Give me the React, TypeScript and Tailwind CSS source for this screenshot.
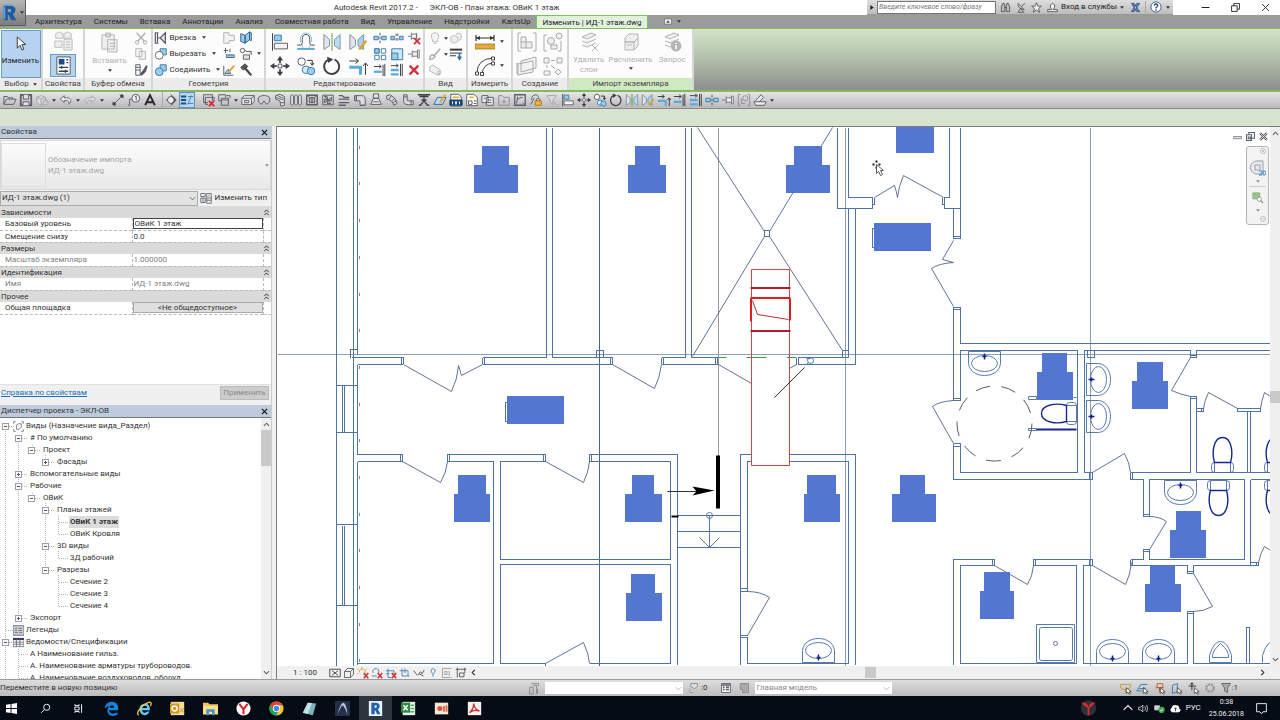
import React from "react";

type IconProps = { className?: string; children: React.ReactNode; color?: string; weight?: string };

/* Every small icon is drawn on a 16 × 16 grid. */
function Icon({ className = "size-[14px]", color = "#5a6068", weight = "1.1", children }: IconProps) {
  return (
    <svg viewBox="0 0 16 16" className={"shrink-0 " + className} fill="none" stroke={color} strokeWidth={weight} aria-hidden="true">
      {children}
    </svg>
  );
}

function Caret({ className = "" }: { className?: string }) {
  return (
    <svg viewBox="0 0 6 4" className={"h-[3px] w-[4px] shrink-0 " + className} aria-hidden="true">
      <path d="M0 0H6L3 4Z" fill="#333" />
    </svg>
  );
}

const BLUE = "#9accec";
const EDGE = "#3f7daa";

const icons = {
  open: <Icon><path d="M1 13V4H5L6 5.500H11V7M1 13L4 7H15L12 13Z" /></Icon>,
  save: <Icon><path d="M2 2H14V14H2Z" strokeWidth="2" /><path d="M5 2V7H11V2M4.500 14V10H11.500V14" fill="#ddd" /></Icon>,
  sync: <Icon color="#a5a5a5"><path d="M2 5L7 3L12 5V11L7 14L2 11ZM2 5L7 7L12 5M7 7V14" fill="#ddd" /><circle cx="12" cy="11" r="3" fill="#ccc" /></Icon>,
  undo: <Icon color="#63676c"><path d="M6 3L1.500 7L6 11V8.500C11 8 12 10 11 13C16 9 13 4.500 6 5.500Z" fill="#eee" /></Icon>,
  redo: <Icon color="#a8a8a8"><path d="M10 3L14.500 7L10 11V8.500C5 8 4 10 5 13C0 9 3 4.500 10 5.500Z" fill="#ddd" /></Icon>,
  measure: <Icon><path d="M4 12L12 4" /><path d="M1.500 10L6 14.500M10 1.500L14.500 6" /><circle cx="3.500" cy="12.500" r="1.600" fill="#333" /><circle cx="12.500" cy="3.500" r="1.600" fill="#333" /></Icon>,
  tag: <Icon><circle cx="10" cy="6" r="4.500" fill="#eee" /><path d="M9 4.500L10.500 3.500V8.500M5.500 7H3V14H1" /></Icon>,
  textA: <Icon color="#2a2a2a"><path d="M2.500 14L8 2.500L13.500 14M4.500 10.500H11.500" strokeWidth="2.200" /></Icon>,
  section: <Icon><circle cx="8" cy="8" r="4" fill="#eee" /><path d="M2 8H4M8 2L14 8L8 14L12 8Z" fill="#333" /></Icon>,
  thin: <Icon color="#1f4c86"><path d="M1 4H7M1 8H7M1 12H7" strokeWidth="2.200" /><path d="M9 13L13 3M9 4H15M9 12H15" stroke="#3e82c4" /></Icon>,
  closeHidden: <Icon><path d="M3 2H13V9M3 2V11H8M5 5H15V9M5 5V13H8" /><path d="M9 9L15 15M15 9L9 15" stroke="#d23" strokeWidth="2" /></Icon>,
  switchWin: <Icon><path d="M2 2H10V5M2 2V9H5M5 6H13V14H5ZM5 8H13" /><path d="M11 3H15V6" /></Icon>,
  duct: <Icon><path d="M1 6L4 3H15V10L12 13H1ZM1 6H12V13M12 6L15 3M4 8.500H9V11H4Z" fill="#eee" /></Icon>,
  ring: <Icon><ellipse cx="8" cy="6" rx="6.500" ry="3" /><path d="M1.500 6V10L5 13L8 9L11 13L14.500 10V6" fill="#ccc" /></Icon>,
  flex: <Icon><path d="M3 3L8 1.500L13 4V14L9 15L8 9L3 7ZM3 5L12 8M5 3L12 6M9 11L13 11" fill="#e8e8e8" /></Icon>,
  radiator: <Icon><path d="M2 3Q4 1 5 3V13Q4 15 2 13ZM6.500 3Q8 1 9.500 3V13Q8 15 6.500 13ZM11 3Q12 1 14 3V13Q12 15 11 13Z" fill="#eee" /></Icon>,
  grille: <Icon><path d="M2 2.500H14V13.500H2Z" strokeWidth="1.600" /><path d="M5 5H11V11H5ZM2 2.500L5 5M14 2.500L11 5M8 5V11" fill="#aaa" /></Icon>,
  fan: <Icon><path d="M2 2.500H14V13.500H2Z" /><path d="M8 8L4 4H7ZM8 8L12 5V9ZM8 8L11 12H7ZM8 8L4 11V7Z" fill="#bbb" /></Icon>,
  list: <Icon><path d="M2 3H6L8 5H14M2 7H14M2 11H14M2 14H10" strokeWidth="1.500" /></Icon>,
  elbow: <Icon><path d="M2 3H10Q14 3 14 8V14H8V9H2ZM2 3V9M8 14H14M4 3V9" fill="#ddd" /></Icon>,
  terminal: <Icon><path d="M5 1H11V6H5ZM2 13L5 6H11L14 13ZM5 10H11" fill="#e4e4e4" /></Icon>,
  hose: <Icon><path d="M2 3L6 2Q12 5 14 12L10 14Q9 8 2 7ZM7 3L5 7M11 6L8 9M13 9L9 11" fill="#ddd" /></Icon>,
  pipe: <Icon><path d="M3 2H7V8Q7 9.500 9 9H14V13.500H8Q3 13 3 9ZM3 4.500H7M11.500 9V13.500" fill="#ddd" /></Icon>,
  sprinkler: <Icon color="#3d4045"><path d="M1 2H15M3 4H13M8 4V9M5 8H11M4 14L8 9L12 14M2 14H4M12 14H14" strokeWidth="1.500" /></Icon>,
  note: <Icon color="#2f6f9f"><path d="M1 13L5 5H15L11 13Z" fill="#bcdcf2" /><path d="M8 11L14 2" stroke="#e0a230" strokeWidth="2.200" /></Icon>,
  rvt: <Icon><path d="M2 1.500H11L14 4.500V15H2Z" fill="#fff" /><path d="M4 5H12" stroke="#e0b030" strokeWidth="2" /><path d="M1 8H15V14H1Z" fill="#16407c" stroke="#16407c" /><path d="M4 9.500V13M7 9.500L8 13L9 9.500M12 9.500V13" stroke="#fff" /></Icon>,
  cadSheet: <Icon><path d="M2 1.500H10L14 5V14.500H2Z" fill="#fff" /><path d="M4 9H8V13H4ZM10 9H13M10 12H13" /><path d="M5 5H10" stroke="#e0b030" strokeWidth="2" /></Icon>,
  sheets: <Icon><path d="M1 3H8V11H1ZM6 5H14V14H6Z" fill="#eee" /><path d="M8 8H12M8 11H12M3 6H5" /></Icon>,
  frame: <Icon color="#8b8f95"><path d="M2 3H6L8 5H14V14H2Z" /><path d="M8 7V12M6 10H10" /></Icon>,
  curve: <Icon><path d="M2 2H14V14H2Z" strokeWidth="1.500" /><path d="M4 12Q4 5 11 5M5 4V8M11 11L13 13" /></Icon>,
  lock: <Icon><path d="M3 8Q3 2 8 2Q10 2 11 5M2 13L6 6" /><path d="M7 9H14V14H7Z" fill="#f0b545" stroke="#b07818" /><path d="M8.500 9V7Q10.500 5 12.500 7V9" /></Icon>,
  funnel: <Icon color="#a3a3a3"><path d="M2 3H13L9 8V13L6 11V8ZM10 10L14 14" fill="#ddd" /></Icon>,
  align: <Icon color={EDGE}><path d="M2 1V15" stroke="#444" /><path d="M3.500 2.500H9V7H3.500Z" fill={BLUE} /><path d="M3.500 9H14V13.500H3.500Z" fill="#f2f4f8" stroke="#666" /></Icon>,
  move: <Icon color="#3c3f43"><path d="M8 1V5.500M8 10.500V15M1 8H5.500M10.500 8H15" strokeWidth="1.400" /><path d="M8 0L10.500 3.500H5.500ZM8 16L10.500 12.500H5.500ZM0 8L3.500 5.500V10.500ZM16 8L12.500 5.500V10.500Z" fill="#3c3f43" stroke="none" /><path d="M6.500 6.500H9.500V9.500H6.500Z" fill="#fff" strokeWidth=".7" /></Icon>,
  copy: <Icon><circle cx="4.500" cy="4.500" r="3" fill="#fff" /><circle cx="8" cy="11" r="3" fill="#d6ebf9" stroke={EDGE} /><circle cx="12" cy="12" r="3" fill={BLUE} stroke={EDGE} /><path d="M9 3.500H13V7M11.500 5.500L13 7.500L14.500 5.500" stroke="#333" /></Icon>,
  rotate: <Icon color="#3c3f43"><path d="M5 3A6 6 0 1 0 10 2.800" strokeWidth="1.500" /><path d="M4 0.500L9 2.500L5 5.500Z" fill="#3c3f43" stroke="none" /></Icon>,
  mirror: <Icon color="#8a9099"><path d="M1.500 2L6 6V11L1.500 14Z" fill="#dfe5ea" /><path d="M14.500 2L10 6V11L14.500 14Z" fill="#b9d9ec" stroke="#7b9db3" /><path d="M8 1V15" stroke="#5a9e45" /></Icon>,
  mirrorPen: <Icon color="#8a9099"><path d="M1.500 2L6 6V11L1.500 14Z" fill="#dfe5ea" /><path d="M12.500 2L8 6V11L12.500 14Z" fill="#a9d3ee" stroke="#6b97b3" /><path d="M9 14L14.500 7" stroke="#e0a230" strokeWidth="2.200" /></Icon>,
  trim: <Icon color="#3a3d42"><path d="M1 4H8M6 2L8.500 4L6 6M14 15V6M12 8L14 5.500L16 8" /><path d="M1 9H10V15" stroke="#5aa9dc" strokeWidth="2.400" /></Icon>,
  trimOne: <Icon color="#3a3d42"><path d="M1 4H9M7 2L9.500 4L7 6M13.500 1V15" /><path d="M1 10H10" stroke="#5aa9dc" strokeWidth="2.600" /><path d="M11.500 2V15" /></Icon>,
  trimMany: <Icon color="#3a3d42"><path d="M1 3H9M7 1L9.500 3L7 5M14 1V15M12 1V15" /><path d="M1 8H10M1 13H10" stroke="#5aa9dc" strokeWidth="2.600" /></Icon>,
  split: <Icon color={EDGE}><path d="M1 6H6V10H1ZM10 6H15V10H10Z" fill={BLUE} /><path d="M8 2V14" stroke="#555" strokeDasharray="3 1.500" /></Icon>,
  splitGap: <Icon color={EDGE}><path d="M1 6H5V10H1ZM11 6H15V10H11Z" fill={BLUE} /><path d="M7 3V13M9 3V13" stroke="#555" strokeDasharray="3 2" /></Icon>,
  pin: <Icon color="#777c82"><path d="M1 8H6M6 4V12M6 5.500H12V10.500H6M12 3.500V12.500H14V3.500Z" fill="#eee" /></Icon>,
  unpin: <Icon color="#777c82"><path d="M1 6H5M5 2V10M5 3.500H11V8.500H5M11 2V10" fill="#eee" /><path d="M8 8L15 15M15 8L8 15" stroke="#d42a35" strokeWidth="2" /></Icon>,
  group: <Icon color="#8b8f95"><path d="M4 1.500H1.500V14.500H4M12 1.500H14.500V14.500H12" /><circle cx="9.500" cy="6" r="3" /><path d="M5 6V12H9" /></Icon>,
  pencilBox: <Icon><path d="M3 9L9 2L12 5L7 10M1 10H15L13 14H3Z" fill="#eee" /></Icon>,
  array: <Icon color={EDGE}><path d="M2 2H7V7H2ZM9.500 2H14.500V7H9.500ZM2 9.500H7V14.500H2ZM9.500 9.500H14.500V14.500H9.500Z" fill="#fff" /><path d="M2 2H7V7H2Z" fill={BLUE} /></Icon>,
  scale: <Icon color={EDGE}><path d="M2 2H14.500V14.500H2Z" fill="#cfe6f6" /><path d="M2 7H9V14.500H2Z" fill={BLUE} /></Icon>,
  remove: <Icon color="#cf3540"><path d="M3 3L13 13M13 3L3 13" strokeWidth="2.800" /></Icon>,
  offset: <Icon><path d="M1 10.500H3.500Q5 10.500 5 8.500V6Q5 2 8 2Q11 2 11 6V8.500Q11 10.500 12.500 10.500H15" stroke="#4a5058" /><path d="M1 13.500H15" stroke="#5aa9dc" strokeWidth="1.600" /><path d="M3.500 8V5.500Q4 0.800 8 0.800Q12 0.800 12.500 5.500V8M5 10.500V12.500M11 10.500V12.500" stroke="#8cc1e4" /></Icon>,
  cut: <Icon color="#b0b0b0"><path d="M3 2L12 12M13 2L4 12" strokeWidth="1.500" /><circle cx="3.500" cy="13" r="2" /><circle cx="12.500" cy="13" r="2" /></Icon>,
  copyGray: <Icon color="#b4b4b4"><path d="M2 2H9V11H2ZM6 5H13V14H6Z" fill="#f6f6f6" /></Icon>,
  matchProps: <Icon><path d="M2 2H7V14H2ZM2 5H7M2 8H7" /><path d="M7 13L11 8L14 3L15 4L13 10L9 14Z" fill="#555" /></Icon>,
  cope: <Icon><path d="M1.500 2V14M4 2V14M1 2H5M1 14H5M4 8H7L13 2V14L7 8" fill="#dde3e8" strokeWidth="1.400" /></Icon>,
  cutGeo: <Icon color={EDGE}><path d="M7 2H14V9H7Z" fill={BLUE} /><circle cx="6" cy="9.500" r="4.500" fill="#fff" stroke="#666" /></Icon>,
  join: <Icon color={EDGE}><path d="M7 2H14V9H7Z" fill={BLUE} /><circle cx="6" cy="10" r="4.500" fill={BLUE} /></Icon>,
  wallJoin: <Icon color="#b0b0b0"><path d="M2 2H8V5H14V11H8V14H2Z" fill="#f4f4f4" /></Icon>,
  openFace: <Icon color="#31618c"><path d="M2 3L7 5V14L2 12ZM7 5L12 1V10L7 14ZM12 1L14 2V11L12 10" fill={BLUE} /></Icon>,
  beam: <Icon><path d="M2 4H7M4 1V7M5 9H14V12H5ZM9 2V6" /><path d="M5 10H14" stroke="#5aa9dc" strokeWidth="2" /></Icon>,
  geo: <Icon><circle cx="4" cy="4" r="2.500" /><path d="M8 5H14V9M5 9H12V14H5ZM6 3L8 5" fill="#e6e6e6" /></Icon>,
  paint: <Icon><path d="M2 3V14H13" /><path d="M3 12L7 7L10 12Z" fill={BLUE} stroke={EDGE} /><path d="M7 11L14 3" stroke="#e0a230" strokeWidth="2" /></Icon>,
  hammer: <Icon color="#444"><path d="M2 5L7 1L10 4L5 8Z" fill="#555" /><path d="M7 6L14 14" strokeWidth="2.400" /></Icon>,
  bulb: <Icon color="#bbb"><path d="M5 10Q3 7 4 4Q8 0 12 4Q13 7 11 10V12H5ZM6 14H10" fill="#f4f4f4" /></Icon>,
  cubes: <Icon color="#bbb"><path d="M2 7L6 5L10 7V12L6 14L2 12ZM8 4L11 2L14 4V9L11 11" fill="#eee" /></Icon>,
  brush: <Icon color="#aaa"><path d="M2 14Q2 9 6 9L8 11Q7 14 2 14ZM7 10L14 2" strokeWidth="1.700" /></Icon>,
  linework: <Icon color="#333"><path d="M1 3H15" strokeWidth="2.200" /><path d="M1 7H15M1 10H8" /><path d="M12 7V14M10 11L12 14L14 11" stroke="#2d6db0" strokeWidth="1.800" /></Icon>,
  pipeGray: <Icon color="#b4b4b4"><path d="M2 5L5 2L14 8V13L11 14L2 9Z" fill="#f0f0f0" /><circle cx="12" cy="11" r="1.500" /></Icon>,
};

type IconName = keyof typeof icons;

function IconButton({ name, label, className = "" }: { name: IconName; label: string; className?: string }) {
  return (
    <button type="button" aria-label={label} className={"flex items-center justify-center " + className}>
      {icons[name]}
    </button>
  );
}

/* ---------- title bar and tabs ---------- */

function RevitR({ className }: { className: string }) {
  return (
    <svg viewBox="0 0 20 20" className={className} aria-hidden="true">
      <path fillRule="evenodd" d="M3 2H12Q18 3 17 8Q16 11 14 12L18 19H12L9 13H8V19H3ZM8 6V9.500H11Q13 8 11 6Z" fill="#1d5c9e" />
      <path d="M3 2L6 0.500H14L12 2ZM3 2V19L5 17V4Z" fill="#5fa3dc" />
    </svg>
  );
}

const tabs = ["Архитектура", "Системы", "Вставка", "Аннотации", "Анализ", "Совместная работа", "Вид", "Управление", "Надстройки", "KartsUp"];

function Header() {
  return (
    <header className="flex h-[29px] shrink-0 border-b border-[#86b862] bg-[#9b9b9b]">
      <button type="button" aria-label="Меню приложения" className="flex h-[26px] w-[26px] shrink-0 items-center border-r border-b border-[#5c5c5c] bg-linear-to-b from-[#b7b7b7] to-[#7d7d7d] pl-px">
        <RevitR className="size-[17px]" />
        <Caret className="ml-[2px]" />
      </button>
      <div className="flex min-w-0 flex-1 flex-col">
        <div className="flex h-[15px] items-center bg-white">
          <h1 className="flex-1 text-center text-[8px] whitespace-pre text-[#333]">Autodesk Revit 2017.2 -      ЭКЛ-ОВ - План этажа: ОВиК 1 этаж</h1>
          <div className="flex h-full items-center border-b border-[#999] bg-linear-to-b from-[#dedede] to-[#bdbdbd] pl-[3px]">
            <svg viewBox="0 0 4 6" className="mr-[3px] h-[5px] w-[4px]" aria-hidden="true"><path d="M0 0L4 3L0 6Z" fill="#222" /></svg>
            <input aria-label="Поиск" placeholder="Введите ключевое слово/фразу" className="h-[13px] w-[119px] border border-[#777] bg-white px-px text-[7px] italic placeholder:text-[#777]" />
            <button type="button" aria-label="Найти" className="ml-[4px]"><Icon className="size-[11px]" color="#444"><path d="M2 14V7L4 2H6L7 6V14ZM14 14V7L12 2H10L9 6V14ZM7 8H9" fill="#bbb" /></Icon></button>
            <button type="button" aria-label="Центр связи" className="ml-[5px]"><Icon className="size-[11px]" color="#444"><path d="M3 2Q2 10 12 11ZM8 6L13 2M3 15L7 9L11 15Z" /></Icon></button>
            <button type="button" aria-label="Избранное" className="ml-[4px]"><Icon className="size-[11px]" color="#444"><path d="M8 1L10 6H15L11 9.500L12.500 15L8 11.500L3.500 15L5 9.500L1 6H6Z" fill="#eee" /></Icon></button>
            <button type="button" className="ml-[5px] flex items-center gap-[3px] text-[8px] text-[#222]">
              <Icon className="size-[11px]" color="#444"><path d="M5 4Q8 0 11 4Q12 8 9 11H15V14H1V11H7Q4 8 5 4Z" fill="#f0f0f0" /></Icon>
              <span className="whitespace-nowrap">Вход в службы</span>
              <Caret />
            </button>
            <button type="button" aria-label="Exchange Apps" className="ml-[6px]"><Icon className="size-[11px]" color="#2c4c86"><path d="M2 2H6L14 14H10ZM14 2H10L2 14H6Z" fill="#5c83bd" /></Icon></button>
            <span className="mx-[4px] h-3 border-l border-[#aaa]" />
            <button type="button" aria-label="Справка" className="flex items-center gap-[4px]">
              <Icon className="size-[12px]" color="#2a4b78"><circle cx="8" cy="8" r="6.800" fill="#fff" /><path d="M5.500 6Q6 4 8 4Q10.500 4.200 10.500 6Q10.300 7.500 8 8.500V10M8 11V13" strokeWidth="1.700" /></Icon>
              <Caret />
            </button>
            <span className="w-[3px]" />
          </div>
          <div className="flex h-full w-[107px] items-center justify-end gap-[21px] pr-[10px]">
            <button type="button" aria-label="Свернуть"><Icon className="size-[9px]" color="#222"><path d="M1 8H15" strokeWidth="1.800" /></Icon></button>
            <button type="button" aria-label="Восстановить"><Icon className="size-[9px]" color="#222"><path d="M1 5H11V15H1ZM5 5V1H15V11H11" strokeWidth="1.600" /></Icon></button>
            <button type="button" aria-label="Закрыть"><Icon className="size-[9px]" color="#222"><path d="M2 2L14 14M14 2L2 14" strokeWidth="1.600" /></Icon></button>
          </div>
        </div>
        <nav className="flex h-[13px] items-stretch bg-[#9b9b9b] pl-[3px] text-[8px] leading-[13px] text-[#222]">
          {tabs.map((t) => (
            <button key={t} type="button" className="px-[6px] whitespace-nowrap">{t}</button>
          ))}
          <button type="button" className="border border-b-0 border-[#7fc05c] bg-[#e2f1db] px-[5px] whitespace-nowrap">Изменить | ИД-1 этаж.dwg</button>
          <button type="button" aria-label="Свернуть ленту" className="ml-[15px] flex items-center gap-[4px]">
            <Icon className="h-[7px] w-[10px]" color="#444"><path d="M0 2H16V14H0Z" fill="#eee" /><path d="M5 10L8 6L11 10Z" fill="#333" /></Icon>
            <Caret />
          </button>
        </nav>
      </div>
    </header>
  );
}

/* ---------- ribbon ---------- */

function Panel({ title, width, green, caret, children }: { title: string; width: string; green?: boolean; caret?: boolean; children: React.ReactNode }) {
  return (
    <section className={"flex shrink-0 flex-col border-r-2 border-[#d6d6d6] bg-[#fcfcfc] " + width}>
      <div className="flex h-[50px] items-center justify-center">{children}</div>
      <h2 className={"flex h-[12px] items-center justify-center gap-1 text-[8px] whitespace-nowrap text-[#444] " + (green ? "bg-[#cfeac2]" : "bg-[#ececec]")}>
        {title}
        {caret && <Caret />}
      </h2>
    </section>
  );
}

function Stack({ names, className = "" }: { names: [IconName, string][]; className?: string }) {
  return (
    <div className={"flex flex-col " + className}>
      {names.map(([n, l]) => <IconButton key={l} name={n} label={l} className="h-4 w-[17px]" />)}
    </div>
  );
}

function BigIcon({ label, children }: { label: string; children: React.ReactNode }) {
  return (
    <button type="button" aria-label={label} className="flex h-[24px] w-[26px] items-center justify-center">
      {children}
    </button>
  );
}

function enlarge(name: IconName) {
  return React.cloneElement(icons[name], { className: "size-[20px]", weight: "0.8" });
}

function GrayTool({ label, children, caret }: { label: React.ReactNode; children: React.ReactNode; caret?: boolean }) {
  return (
    <button type="button" className="flex h-[48px] flex-1 flex-col items-center pt-[2px] text-center text-[8px] leading-[10px] text-[#b0b0b0]">
      <svg viewBox="0 0 20 20" className="mb-[3px] size-[20px]" fill="#efefef" stroke="#b5b5b5" aria-hidden="true">{children}</svg>
      <span>{label}</span>
      {caret && <Caret className="mt-[2px]" />}
    </button>
  );
}

function Ribbon() {
  return (
    <div className="flex h-[63px] shrink-0 overflow-hidden border-b-2 border-[#86b862] bg-linear-to-b from-[#d2e3c8] via-[#b1bfaa] to-[#8e8e8e]">
      <Panel title="Выбор" width="w-[43px]" caret>
        <button type="button" className="flex h-[48px] w-[40px] flex-col items-center border border-[#6a9cc9] bg-[#b5d3ee] pt-[5px] text-[8px] text-[#222]">
          <svg viewBox="0 0 12 16" className="mb-[4px] h-[15px] w-[12px]" aria-hidden="true"><path d="M2 1V13L5 10L7 15L9 14L7 9H11Z" fill="#fff" stroke="#333" /></svg>
          Изменить
        </button>
      </Panel>
      <Panel title="Свойства" width="w-[42px]">
        <div className="flex flex-col items-center gap-[2px]">
          <button type="button" aria-label="Типоразмер" className="flex h-[22px] items-center">
            <svg viewBox="0 0 22 22" className="size-[20px]" fill="#eee" stroke="#bcbcbc" aria-hidden="true"><path d="M3 3L7 1L11 3V8H3ZM12 3L16 1L20 3V8H12ZM2 11H10V18H2ZM12 9H21V21H12ZM14 12H19M14 15H19M14 18H19" /></svg>
          </button>
          <button type="button" aria-label="Свойства" className="flex h-[23px] w-[26px] items-center justify-center border border-[#6a9cc9] bg-[#b5d3ee]">
            <svg viewBox="0 0 20 20" className="size-[19px]" aria-hidden="true"><path d="M3 1H17V19H3Z" fill="#fff" stroke="#555" /><path d="M5 3H11V9H5Z" fill="#1b4a82" /><path d="M13 4H15M13 7H15M5 12H15M5 16H15M8 10.500V13.500M12 14.500V17.500" stroke="#345" strokeWidth="1.500" /></svg>
          </button>
        </div>
      </Panel>
      <Panel title="Буфер обмена" width="w-[68px]">
        <button type="button" className="flex h-[48px] w-[46px] flex-col items-center pt-[2px] text-[8px] text-[#b0b0b0]">
          <svg viewBox="0 0 20 22" className="mb-[2px] h-[21px] w-[19px]" fill="#efefef" stroke="#b5b5b5" aria-hidden="true"><path d="M2 3H15V18H2ZM6 1H11V5H6ZM8 8H18V21H8ZM10 12H16M10 15H16" /></svg>
          Вставить
          <Caret className="mt-[2px]" />
        </button>
        <Stack names={[["cut", "Вырезать в буфер"], ["copyGray", "Копировать в буфер"], ["matchProps", "Копировать свойства"]]} />
      </Panel>
      <Panel title="Геометрия" width="w-[113px]">
        <div className="flex flex-1 flex-col pl-px">
          {([["cope", "Врезка"], ["cutGeo", "Вырезать"], ["join", "Соединить"]] as [IconName, string][]).map(([n, l]) => (
            <button key={n} type="button" className="flex h-4 items-center gap-[2px] text-[8px] text-[#333]">
              {icons[n]}{l}<Caret className="ml-[4px]" />
            </button>
          ))}
        </div>
        <Stack names={[["wallJoin", "Соединение стен"], ["beam", "Стык балок"], ["paint", "Краска"]]} />
        <Stack names={[["openFace", "Разделить грань"], ["geo", "Стык"], ["hammer", "Снос"]]} />
        <Caret className="mx-[3px]" />
      </Panel>
      <Panel title="Редактирование" width="w-[159px]">
        <div className="grid grid-cols-4">
          <BigIcon label="Выровнять">{enlarge("align")}</BigIcon>
          <BigIcon label="Смещение">{enlarge("offset")}</BigIcon>
          <BigIcon label="Зеркало: выбрать ось">{enlarge("mirror")}</BigIcon>
          <BigIcon label="Зеркало: нарисовать ось">{enlarge("mirrorPen")}</BigIcon>
          <BigIcon label="Переместить">{enlarge("move")}</BigIcon>
          <BigIcon label="Копировать">{enlarge("copy")}</BigIcon>
          <BigIcon label="Повернуть">{enlarge("rotate")}</BigIcon>
          <BigIcon label="Обрезать до угла">{enlarge("trim")}</BigIcon>
        </div>
        <Stack names={[["split", "Разделить"], ["array", "Массив"], ["trimOne", "Удлинить"]]} />
        <Stack names={[["splitGap", "Разделить с зазором"], ["scale", "Масштаб"], ["trimMany", "Удлинить несколько"]]} />
        <Stack names={[["unpin", "Открепить"], ["pin", "Закрепить"], ["remove", "Удалить"]]} />
      </Panel>
      <Panel title="Вид" width="w-[43px]">
        <Stack names={[["bulb", "Скрыть"], ["brush", "Переопределить"], ["pipeGray", "Вид элемента"]]} />
        <div className="flex h-[48px] flex-col gap-[13px] pt-[7px]"><Caret /><Caret /></div>
        <div className="h-[48px]"><Stack names={[["cubes", "Видимость"], ["linework", "Линии"]]} /></div>
      </Panel>
      <Panel title="Измерить" width="w-[45px]">
        <div className="flex flex-col">
          <button type="button" aria-label="Измерить длину" className="flex h-6 items-center gap-[5px]">
            <svg viewBox="0 0 20 16" className="h-[16px] w-[20px]" aria-hidden="true"><path d="M1 4H19M1 1V7M19 1V7" stroke="#333" strokeWidth="1.200" /><path d="M1 4L5 2V6ZM19 4L15 2V6Z" fill="#333" /><path d="M0 10H20V15H0Z" fill="#e3ab3d" stroke="#9a6c14" strokeWidth=".7" /></svg>
            <Caret />
          </button>
          <button type="button" aria-label="Размер" className="flex h-6 items-center gap-[5px]">
            <svg viewBox="0 0 20 20" className="size-[20px]" fill="none" stroke="#444" aria-hidden="true"><path d="M2 17Q2 3 18 2M7 18Q8 8 18 7" /><path d="M0.500 16H3.500V19H0.500ZM5.500 16.500H8.500V19.500H5.500ZM16.500 1H19.500V4H16.500ZM16.500 6H19.500V9H16.500Z" fill="#fff" /></svg>
            <Caret />
          </button>
        </div>
      </Panel>
      <Panel title="Создание" width="w-[56px]">
        <div className="grid grid-cols-2">
          <BigIcon label="Создать сборку"><svg viewBox="0 0 20 20" className="size-[20px]" fill="#eee" stroke="#aaa" aria-hidden="true"><path d="M4 1H1V19H4M16 1H19V19H16" fill="none" /><path d="M4 5H9V10H15V16H4ZM4 10H9V16" /></svg></BigIcon>
          <BigIcon label="Создать группу"><svg viewBox="0 0 20 20" className="size-[20px]" fill="#eee" stroke="#aaa" aria-hidden="true"><path d="M4 3H1V19H4M15 19H18V9" fill="none" /><circle cx="8" cy="9" r="3.500" /><path d="M8 13H14V17H8Z" /><circle cx="16" cy="4" r="3" /></svg></BigIcon>
          <BigIcon label="Создать части"><svg viewBox="0 0 22 20" className="h-[20px] w-[22px]" fill="#f2f2f2" stroke="#aaa" aria-hidden="true"><path d="M5 5L20 1V12L5 16ZM2 8L17 5V16L2 19ZM2 8L1 7V17L2 19" /></svg></BigIcon>
          <BigIcon label="Создать похожий"><svg viewBox="0 0 20 20" className="size-[20px]" fill="#f2f2f2" stroke="#aaa" aria-hidden="true"><path d="M1 2H6V7H1ZM14 2H19V7H14ZM8 4.500H12M1 15H7V19H1ZM4 9V12M8 9L12 13M15 13L18 16L15 19L12 16Z" /></svg></BigIcon>
        </div>
      </Panel>
      <Panel title="Импорт экземпляра" width="w-[125px]" green>
        <GrayTool label={<>Удалить<br />слои</>}><path d="M3 5L12 1L17 3L8 7ZM3 9L8 11L17 7M3 13L8 15L17 11M13 13L19 19M19 13L13 19" /></GrayTool>
        <GrayTool label="Расчленить" caret><path d="M4 6L8 2H17V6L13 10H4ZM4 10H13V18H4ZM13 10L17 6V14L13 18M6 13H11" /></GrayTool>
        <GrayTool label="Запрос"><path d="M3 5L12 1L17 3L8 7ZM3 9L8 11L17 7M3 13L8 15" /><circle cx="14" cy="14" r="5" fill="#b5b5b5" /><path d="M14 11V12M14 13V17" stroke="#fff" strokeWidth="1.600" /></GrayTool>
      </Panel>
    </div>
  );
}

/* ---------- quick access toolbar ---------- */

const systemTools: IconName[] = [
  "duct", "ring", "flex", "radiator", "grille", "fan", "list", "elbow", "terminal", "hose", "pipe", "sprinkler", "note", "rvt", "cadSheet", "sheets", "frame",
  "curve", "lock", "funnel", "align", "move", "copy", "rotate", "mirror", "mirrorPen", "trim", "trimOne", "trimMany", "split", "pin", "group", "pencilBox",
];

function QuickBar() {
  const drop = (l: string) => <button type="button" aria-label={l} className="flex w-2 items-center justify-center"><Caret /></button>;
  return (
    <>
      <div className="flex h-[17px] shrink-0 items-stretch border-b border-[#8b8b8b] bg-linear-to-b from-[#e6e6e6] to-[#b9b9b9] pl-[2px]">
        <IconButton name="open" label="Открыть" className="w-4" />
        <IconButton name="save" label="Сохранить" className="w-4" />
        <IconButton name="sync" label="Синхронизировать" className="w-4" />
        {drop("Варианты синхронизации")}
        <IconButton name="undo" label="Отменить" className="w-4" />
        {drop("Журнал отмены")}
        <IconButton name="redo" label="Вернуть" className="w-4" />
        {drop("Журнал возврата")}
        <div className="ml-[4px] flex border-r border-[#aaa] pr-1">
          <IconButton name="measure" label="Параллельный размер" className="w-4" />
          <IconButton name="tag" label="Марка" className="w-4" />
          <IconButton name="textA" label="Текст" className="w-4" />
        </div>
        <IconButton name="section" label="Разрез" className="w-4" />
        <IconButton name="thin" label="Тонкие линии" className="w-4 border border-[#5d93c4] bg-[#b9d7f0]" />
        <IconButton name="closeHidden" label="Закрыть скрытые" className="ml-[5px] w-4" />
        <IconButton name="switchWin" label="Переключить окна" className="w-4" />
        {drop("Список окон")}
        {systemTools.map((n, i) => <IconButton key={i} name={n} label={"Инструмент " + n} className="w-4" />)}
        {drop("Настроить панель")}
      </div>
      <div className="h-[17px] shrink-0 bg-[#d7e3cf]" />
    </>
  );
}

/* ---------- properties palette ---------- */

function PaletteTitle({ children }: { children: React.ReactNode }) {
  return (
    <div className="flex h-[13px] shrink-0 items-center justify-between border-b border-[#777] bg-[#becbdc] pr-[3px] pl-px text-[8px] text-[#333]">
      <h2>{children}</h2>
      <button type="button" aria-label="Закрыть"><Icon className="size-[7px]" color="#111"><path d="M2 2L14 14M14 2L2 14" strokeWidth="2.600" /></Icon></button>
    </div>
  );
}

type PropRow = { name: string; value: string; kind?: "focus" | "button"; dim?: boolean };
const groups: { title: string; rows: PropRow[] }[] = [
  { title: "Зависимости", rows: [{ name: "Базовый уровень", value: "ОВиК 1 этаж", kind: "focus" }, { name: "Смещение снизу", value: "0.0" }] },
  { title: "Размеры", rows: [{ name: "Масштаб экземпляра", value: "1.000000", dim: true }] },
  { title: "Идентификация", rows: [{ name: "Имя", value: "ИД-1 этаж.dwg", dim: true }] },
  { title: "Прочее", rows: [{ name: "Общая площадка", value: "<Не общедоступное>", kind: "button" }] },
];

function Properties() {
  return (
    <section className="flex h-[279px] shrink-0 flex-col">
      <PaletteTitle>Свойства</PaletteTitle>
      <button type="button" className="mt-px flex h-[50px] shrink-0 items-center border border-[#d8d8d8] bg-linear-to-b from-[#fdfdfd] to-[#e8e8e8] text-left text-[8px] leading-[11px] text-[#a6a6a6]">
        <span className="h-[44px] w-[45px] border border-[#dedede]" />
        <span className="ml-[2px] flex-1">Обозначение импорта<br />ИД-1 этаж.dwg</span>
        <Caret className="mr-px opacity-50" />
      </button>
      <div className="flex h-[16px] shrink-0 items-center justify-between pr-[4px]">
        <div className="relative h-[15px] w-[198px]">
          <select aria-label="Экземпляр" className="block h-full w-full appearance-none border border-[#aaa] bg-[#e2e2e2] px-px text-[8px] text-[#333]"><option>ИД-1 этаж.dwg (1)</option></select>
          <Icon className="pointer-events-none absolute top-[4px] right-[2px] size-[7px]"><path d="M2 5L8 11L14 5" strokeWidth="2" /></Icon>
        </div>
        <button type="button" className="flex items-center gap-[3px] text-[8px] whitespace-nowrap text-[#333]">
          <Icon className="size-[12px]"><path d="M1 2H7V6H1ZM1 8H7V14H1ZM9 2H15V15H9ZM11 5H13M9 8H15M9 11H15M4 8V14" /></Icon>
          Изменить тип
        </button>
      </div>
      <div className="min-h-0 flex-1 bg-white">
        <table className="w-full table-fixed border-collapse text-[8px] leading-[11px] text-[#333]">
          <colgroup><col className="w-[132px]" /><col /><col className="w-[8px]" /></colgroup>
          {groups.map((g) => (
            <tbody key={g.title}>
              <tr className="h-[12px] bg-[#dadada]">
                <th colSpan={2} className="p-0 pl-px text-left font-normal">{g.title}</th>
                <th className="p-0"><Icon className="mr-[3px] size-[7px]" color="#222"><path d="M3 7L8 2L13 7M3 14L8 9L13 14" strokeWidth="2" /></Icon></th>
              </tr>
              {g.rows.map((r) => (
                <tr key={r.name} className={"h-[12px] border-b border-dashed border-[#bbb] " + (r.dim ? "text-[#828282]" : "")}>
                  <td className="border-r border-dashed border-[#bbb] p-0 pl-[5px]">{r.name}</td>
                  <td className="border-r border-dashed border-[#bbb] p-0">
                    {r.kind === "button" ? (
                      <button type="button" className="block h-[11px] w-full border border-[#aaa] bg-[#dfdfdf] leading-[9px]">{r.value}</button>
                    ) : (
                      <input aria-label={r.name} defaultValue={r.value} className={"block h-[11px] w-full px-px " + (r.kind === "focus" ? "border border-[#444]" : "")} />
                    )}
                  </td>
                  <td className="p-0" />
                </tr>
              ))}
            </tbody>
          ))}
        </table>
      </div>
      <div className="flex h-[21px] shrink-0 items-start justify-between border-t border-[#e2e2e2] bg-[#f0f0f0] pt-px pr-[2px] pl-px text-[8px] leading-[14px]">
        <a href="#help" className="text-[#2270b5] underline">Справка по свойствам</a>
        <button type="button" disabled className="h-[14px] w-[49px] border border-[#bbb] bg-[#ccc] leading-[12px] text-[#8a8a8a]">Применить</button>
      </div>
    </section>
  );
}

/* ---------- project browser ---------- */

type Branch = "minus" | "plus" | "leaf";
type Node = { text: string; pad: string; branch: Branch; icon?: "views" | "legend" | "schedule"; active?: boolean };
const nodes: Node[] = [
  { text: "Виды (Назначение вида_Раздел)", pad: "pl-[2px]", branch: "minus", icon: "views" },
  { text: "# По умолчанию", pad: "pl-[15px]", branch: "minus" },
  { text: "Проект", pad: "pl-[28px]", branch: "minus" },
  { text: "Фасады", pad: "pl-[42px]", branch: "plus" },
  { text: "Вспомогательные виды", pad: "pl-[15px]", branch: "plus" },
  { text: "Рабочие", pad: "pl-[15px]", branch: "minus" },
  { text: "ОВиК", pad: "pl-[28px]", branch: "minus" },
  { text: "Планы этажей", pad: "pl-[42px]", branch: "minus" },
  { text: "ОВиК 1 этаж", pad: "pl-[55px]", branch: "leaf", active: true },
  { text: "ОВиК Кровля", pad: "pl-[55px]", branch: "leaf" },
  { text: "3D виды", pad: "pl-[42px]", branch: "minus" },
  { text: "3Д рабочий", pad: "pl-[55px]", branch: "leaf" },
  { text: "Разрезы", pad: "pl-[42px]", branch: "minus" },
  { text: "Сечение 2", pad: "pl-[55px]", branch: "leaf" },
  { text: "Сечение 3", pad: "pl-[55px]", branch: "leaf" },
  { text: "Сечение 4", pad: "pl-[55px]", branch: "leaf" },
  { text: "Экспорт", pad: "pl-[15px]", branch: "plus" },
  { text: "Легенды", pad: "pl-[2px]", branch: "leaf", icon: "legend" },
  { text: "Ведомости/Спецификации", pad: "pl-[2px]", branch: "minus", icon: "schedule" },
  { text: "А Наименование гильз.", pad: "pl-[15px]", branch: "leaf" },
  { text: "А. Наименование арматуры трубороводов.", pad: "pl-[15px]", branch: "leaf" },
  { text: "А. Наименование воздуховодов, оборуд.", pad: "pl-[15px]", branch: "leaf" },
];

function BranchMark({ kind }: { kind: Branch }) {
  return (
    <svg viewBox="0 0 14 12" className="h-[12px] w-[14px] shrink-0" fill="none" stroke="#9a9fa8" shapeRendering="crispEdges" aria-hidden="true">
      <path d={kind === "leaf" ? "M3.500 6.500H13" : "M7 6.500H13"} stroke="#b5b5b5" strokeDasharray="1 1" />
      {kind !== "leaf" && <path d="M0.500 3.500H6.500V9.500H0.500Z" fill="#fff" />}
      {kind !== "leaf" && <path d={kind === "plus" ? "M2 6.500H5M3.500 5V8" : "M2 6.500H5"} stroke="#555" />}
    </svg>
  );
}

function NodeIcon({ kind }: { kind: "views" | "legend" | "schedule" }) {
  return (
    <Icon className="-ml-[3px] mr-px size-[11px]">
      {kind === "views" && <><path d="M4 1H1V4M12 1H15V4M4 15H1V12M12 15H15V12" /><path d="M5 6L8 4H12V9L9 12H5Z" /></>}
      {kind === "legend" && <><path d="M0 1H16V15H0Z" fill="#c9ccd3" /><path d="M3 5H6M8 5H13M3 8H6M8 8H13M3 11H7M9 11H13" /></>}
      {kind === "schedule" && <><path d="M0 2H16V14H0Z" fill="#fff" /><path d="M0 3H16" strokeWidth="3" stroke="#333a5a" /><path d="M0 7.500H16M0 10.500H16M5 3V14M10 3V14" /></>}
    </Icon>
  );
}

function Browser() {
  return (
    <section className="flex min-h-0 flex-1 flex-col">
      <PaletteTitle>Диспетчер проекта - ЭКЛ-ОВ</PaletteTitle>
      <div className="flex min-h-0 flex-1 bg-white">
        <ul className="relative min-w-0 flex-1 overflow-hidden pt-[2px] text-[8px] text-[#333]">
          <svg className="pointer-events-none absolute inset-0 h-full w-full" stroke="#b9b9b9" strokeDasharray="1 1" shapeRendering="crispEdges" aria-hidden="true">
            <path d="M5.500 11V261M18.500 19V201M18.500 231V261M32.500 27V32M45.500 37V44M32.500 75V80M45.500 85V153M58.500 97V117M58.500 133V141M58.500 157V189" />
          </svg>
          {nodes.map((n) => (
            <li key={n.text} className={"relative flex h-[12px] items-center whitespace-nowrap " + n.pad}>
              <BranchMark kind={n.branch} />
              {n.icon && <NodeIcon kind={n.icon} />}
              <button type="button" className={"leading-[12px] " + (n.active ? "bg-[#dcdcdc] px-px font-bold" : "pl-px")}>{n.text}</button>
            </li>
          ))}
        </ul>
        <div className="flex w-[10px] shrink-0 flex-col items-center bg-[#f0f0f0] py-[3px]">
          <Icon className="size-[7px]"><path d="M2 11L8 5L14 11" strokeWidth="2.400" /></Icon>
          <div className="mt-[2px] h-[36px] w-full bg-[#c9c9c9]" />
          <Icon className="mt-auto size-[7px]"><path d="M2 5L8 11L14 5" strokeWidth="2.400" /></Icon>
        </div>
      </div>
    </section>
  );
}

/* ---------- floor plan ---------- */

const WALL = "#4f73a3";
const GRID = "#8ba0bd";

/* Wall segments, one subpath for each. */
const walls = `
M336 127V665M353 127V665M357 127V354M357 364V454M357 461V664
M546 127V357M552 127V357M685 127V357M691 127V357
M350 357V349H357M351 357H401M401 357V363M403 357V363M357 364H402M401 357H403
M482 357V363M484 357V363M482 357H546M482 364H612M552 357H612M610 357V363M612 357V363
M596 357V350H603V357M661 357V363M663 357V363M661 357H685M661 364H717M691 357H717M715 357V363M717 357V363
M796 357V364M798 357V364M797 357H848M797 364H855V208M848 357V208M842 357V350H848
M837 127V208H872V204M848 127V197H872V204H874V197M944 208H960M949 127V197H944V208M942 197V204H944M960 127V238H953V208M953 236H960
M953 398V307H960V343H1270M953 309H960M960 398V350H1077V472H960V446M953 398H960V400H953V398M953 443H960V446H953V443
M953 446V479H1090M1084 472V350H1190V357H1196V350H1270M1190 355H1196M1084 472H1092V479H1089V472M1087 350V357H1094V350
M1190 472V396H1196V472M1190 398H1196M1130 472H1190M1132 472V479M1130 472V479M1130 479H1143V516H1149V479H1244V559H1149M1143 514H1149
M1196 472H1270M1250 479H1270M1250 479V564M1143 559V549H1149V559M1143 551H1149M1196 408H1203V411H1196M1201 408V411M1237 408H1260V411H1237ZM1247 411V472M1250 411V472
M336 385H357M336 432H357M336 524H357M336 605H357M342 385V432M344 385V432M342 525V605M344 525V605
M357 454H402V461M357 461H402M400 454V461M447 461V454H545V461H500V559H670V461H589V454H677V664M449 454V461M447 461H493V663H357M543 454V461M591 454V461
M500 663V564H670V663H589M500 663H545V665M740 664V454H751M789 454H855V664M747 588V461H751M789 461H848V663H747V637H740M740 588H747V591H740M740 635H747
M677 515H740M677 531H740M677 547H740
M953 664V559H994V565H960V663H1076V565H1033V559H1092V565H1083V663H1187V611H1193V663H1270M992 559V565M1035 559V565M1089 559V565
M1130 559H1143M1130 559V565H1187V573H1193V565H1258V562H1250M1132 559V565M1187 571H1193M1187 613H1193M1256 562V565
M1246 663V627H1249V663`;

/* Door leaves with their swing. */
const doors = `
M403 364L451 391Q457 379 458 365L461 375L482 364
M612 364L654 388Q659 378 661 364
M718 364L751 383M789 368L796 364
M874 197L894 185Q896 191 897 197Q898 186 903 175L943 197
M953 240L942 259L953 262Q938 263 931 268L953 306
M953 400Q938 401 932 406L953 443
M1190 357L1171 390Q1180 394 1190 396
M402 461L440 482Q446 472 447 461M545 461L583 482Q588 472 589 461M545 663L583 642Q588 652 589 663
M747 591Q760 591 769 597L747 635
M1092 472L1124 453Q1129 462 1130 472M1203 408Q1204 400 1208 392L1237 408M1260 408Q1261 400 1264 392L1270 396
M1149 516Q1159 516 1166 521L1149 549M994 565L1027 584Q1032 576 1033 565M1092 565L1125 584Q1130 574 1131 562
M1193 573L1212 606Q1203 611 1193 611M1258 562Q1260 552 1264 546L1270 550
M697 127L764 231M832 127L769 231M764 236L692 356M769 236L842 350`;

/* [lower x, lower y, lower width, upper x, upper width]: the upper block is 19 high, the lower 28. */
const units: [number, number, number, number, number][] = [
  [474, 165, 44, 482, 27], [628, 165, 38, 635, 25], [786, 165, 44, 794, 28], [454, 494, 36, 458, 28], [625, 494, 37, 632, 22], [626, 593, 36, 631, 24],
  [804, 494, 36, 807, 29], [892, 494, 44, 900, 25], [1037, 372, 36, 1042, 25], [1132, 381, 36, 1137, 26], [1170, 530, 36, 1176, 25], [1145, 584, 36, 1150, 25], [980, 591, 34, 984, 26],
];

function Sink({ x, y, turn = 0 }: { x: number; y: number; turn?: number }) {
  return (
    <g transform={`translate(${x} ${y}) rotate(${turn})`}>
      <path d="M-16 0H16V12C15 20 8 24 0 24C-8 24 -15 20 -16 12Z" />
      <ellipse cx="0" cy="12" rx="13" ry="8" />
      <path d="M0 2V8M-2 5H2" stroke="#10208c" strokeWidth="1.500" />
    </g>
  );
}

function Toilet({ x, y, turn = 0 }: { x: number; y: number; turn?: number }) {
  return (
    <g transform={`translate(${x} ${y}) rotate(${turn})`}>
      <rect x="-11" y="0" width="22" height="10" rx="3" />
      <path d="M-8 0V10M8 0V10" />
      <path d="M-8 10H8C11 20 9 35 0 35C-9 35 -11 20 -8 10Z" stroke="#16288e" strokeWidth="1.400" />
    </g>
  );
}

function FloorPlan() {
  return (
    <svg className="block h-full w-full" fill="none" role="img" aria-label="План 1 этажа">
      <g transform="translate(-276.500 -126.500)">
        <g shapeRendering="crispEdges">
          <path d="M277 354H1270M845 127V665M1090 127V665" stroke={GRID} />
          <path d="M599 127V665" stroke="#46628c" />
          <path d="M718 127V455" stroke="#9b9b9b" />
          <path d={walls} stroke={WALL} />
          <path d="M874 228H872V247H874M507 402H505V421H507M764 230H769V236H764Z" stroke={WALL} />
          <path d="M359 145V148M359 181V184M359 218V221M359 255V258M359 292V295M359 328V331M359 365V368M359 402V405M359 438V441M359 475V478M359 512V515M359 548V551M359 585V588M359 622V625M359 658V661" stroke="#6f88b4" />
        </g>
        <path d={doors} stroke="#50638c" strokeWidth="0.900" />
      </g>
      <g transform="translate(-277 -127)" fill="#5377d0" shapeRendering="crispEdges">
        {units.map(([x, y, w, ux, uw]) => (
          <g key={x + "-" + y}>
            <rect x={x} y={y} width={w} height="28" />
            <rect x={ux} y={y - 19} width={uw} height="20" />
          </g>
        ))}
        <rect x="896" y="127" width="38" height="26" />
        <rect x="874" y="223" width="57" height="28" />
        <rect x="507" y="396" width="57" height="28" />
      </g>
      <g transform="translate(-276.500 -126.500)">
        <g stroke="#476ba5" strokeWidth="0.900">
          <Sink x={984} y={351} />
          <Sink x={1086} y={379} turn={-90} />
          <Sink x={1086} y={416} turn={-90} />
          <Sink x={1180} y={480} />
          <Sink x={818} y={662} turn={180} />
          <Sink x={1112} y={663} turn={180} />
          <Sink x={1158} y={663} turn={180} />
          <Toilet x={1222} y={472} turn={180} />
          <Toilet x={1275} y={472} turn={180} />
          <Toilet x={1218} y={480} />
          <Toilet x={1275} y={480} />
          <Toilet x={1076} y={413} turn={90} />
          <path d="M1209 662V655Q1213 641 1220 641Q1227 641 1231 655V662ZM1212 657Q1211 651 1220 643Q1229 651 1228 657ZM1262 662V655Q1266 641 1273 641" />
          <path d="M1036 624H1074V662H1036ZM1041 627H1070Q1072 627 1072 629V658Q1072 660 1070 660H1041Q1039 660 1039 658V629Q1039 627 1041 627Z" />
          <circle cx="1055" cy="643" r="2" />
          <circle cx="709" cy="515" r="3" />
          <path d="M709 515V547M699 537L709 547L719 537" />
          <circle cx="810" cy="360" r="3" stroke="#2d6dc0" />
          <path d="M806 364L808 362M806 358H810" stroke="#2d6dc0" />
          <path d="M1028 396H1036V399H1028ZM1073 397H1076M1028 428H1036V430H1028Z" />
        </g>
        <circle cx="994" cy="423" r="37.500" stroke="#555b78" strokeDasharray="15 11.200" />
        <path d="M1036 429H1076" stroke="#16288e" strokeWidth="2" />
        <path d="M718 357H726M746 357H766M786 357H796" stroke="#3c9a3c" />
        <path d="M751 269H789V465H751Z" stroke="#e04040" />
        <path d="M750 287.500H790M750 330.500H790" stroke="#b01c28" strokeWidth="2" />
        <path d="M750 297.500H790M750.500 298V321M789.500 298V320" stroke="#e01b1b" strokeWidth="2" />
        <path d="M752 300L757 314L788 319" stroke="#b33" />
        <path d="M804 367L774 397" stroke="#333" />
        <path d="M667 491H700" stroke="#333" />
        <path d="M692 486L714 490L692 495L696 491Z" fill="#000" />
        <path d="M717.500 455V508" stroke="#000" strokeWidth="4" />
        <path d="M671 516H678" stroke="#000" strokeWidth="2" />
        <g transform="translate(871 159)" fill="#222">
          <path d="M5 3V0M5 7V10M3 5H0M7 5H10" stroke="#222" strokeWidth="2" strokeDasharray="2 1" />
          <path d="M5 5V14L7 12L9 16L11 15L9 11H12Z" fill="#fff" stroke="#333" strokeWidth="0.800" />
        </g>
      </g>
    </svg>
  );
}

function ViewArea() {
  return (
    <main className="flex min-w-0 flex-1 flex-col border-t border-l border-[#7c7c7c] bg-white">
      <div className="flex min-h-0 flex-1">
        <div className="relative min-w-0 flex-1 overflow-hidden">
          <FloorPlan />
          <div className="absolute top-[5px] right-[2px] flex items-center gap-[4px]">
            <button type="button" aria-label="Свернуть вид"><Icon className="size-[9px]"><path d="M1 8H15V12H1Z" fill="#ddd" /></Icon></button>
            <button type="button" aria-label="Развернуть вид"><Icon className="size-[9px]"><path d="M1 5H10V15H1ZM5 5V1H15V11H10M4 9H8V12H4Z" strokeWidth="1.800" /></Icon></button>
            <button type="button" aria-label="Закрыть вид"><Icon className="size-[9px]"><path d="M2 2L14 14M14 2L2 14" strokeWidth="4" /><path d="M2 2L14 14M14 2L2 14" strokeWidth="1.400" stroke="#eee" /></Icon></button>
          </div>
          <div className="absolute top-[19px] right-[1px] flex h-[79px] w-[23px] flex-col items-center rounded-[3px] border border-[#b5b5b5] bg-[#f3f3f3]">
            <Icon className="mt-px mr-[2px] size-[6px] self-end" color="#888"><circle cx="8" cy="8" r="7" /><path d="M5 5L11 11M11 5L5 11" /></Icon>
            <button type="button" aria-label="Штурвал навигации" className="mt-[6px]">
              <svg viewBox="0 0 16 16" className="size-[16px]" fill="none" stroke="#9a9fa6" aria-hidden="true"><path d="M7 1H13V14H7A6.500 6.500 0 0 1 7 1Z" fill="#e9ecef" /><rect x="5" y="5" width="5" height="5" /><path d="M9 11H12V13L9 15H12M13 11H15L16 13L15 15H13Z" stroke="#4b8fd0" /></svg>
            </button>
            <Caret className="mt-[4px] opacity-50" />
            <span className="my-[3px] w-[17px] border-t border-[#ccc]" />
            <button type="button" aria-label="Зумирование" className="mt-[2px]">
              <svg viewBox="0 0 14 14" className="size-[12px]" fill="none" stroke="#8d929a" aria-hidden="true"><path d="M1 1H9V8H1Z" fill="#9cc48a" stroke="#84b070" /><circle cx="8.500" cy="8.500" r="2.500" fill="#fff" /><path d="M10 10L13 13" strokeWidth="1.500" /></svg>
            </button>
            <Caret className="mt-[5px] opacity-50" />
            <Icon className="mt-auto mr-[2px] mb-[2px] size-[6px] self-end" color="#888"><circle cx="8" cy="8" r="7" /><path d="M4 8H12" /></Icon>
          </div>
        </div>
        <div className="flex w-[10px] shrink-0 flex-col items-center bg-[#efefef] py-[3px]">
          <Icon className="size-[7px]"><path d="M2 11L8 5L14 11" strokeWidth="2.400" /></Icon>
          <span className="flex-[252]" />
          <div className="h-[12px] w-full bg-[#c9c9c9]" />
          <span className="flex-[252]" />
          <Icon className="size-[7px]"><path d="M2 5L8 11L14 5" strokeWidth="2.400" /></Icon>
        </div>
      </div>
      <div className="flex h-[13px] shrink-0 items-center bg-[#f0f0f0] pr-[14px] pl-[16px] text-[8px] text-[#333]">
        <button type="button" className="mr-[12px] w-[24px] whitespace-nowrap">1 : 100</button>
        <div className="flex gap-[2px]">
          {viewControls.map(([l, d, c]) => (
            <button key={l} type="button" aria-label={l}>
              <Icon className="size-[12px]" color={c}><path d={d} />{l.startsWith("Выкл") && <path d="M9 8L15 15M15 8L9 15" stroke="#d2323a" strokeWidth="2.200" />}</Icon>
            </button>
          ))}
        </div>
        <Icon className="ml-[3px] size-[7px]" color="#222"><path d="M11 2L5 8L11 14" strokeWidth="2.400" /></Icon>
        <span className="flex-[386]" />
        <div className="h-[11px] w-[11px] bg-[#c9c9c9]" />
        <span className="flex-[382]" />
        <Icon className="size-[7px]" color="#222"><path d="M5 2L11 8L5 14" strokeWidth="2.400" /></Icon>
      </div>
    </main>
  );
}

const viewControls: [string, string, string][] = [
  ["Уровень детализации", "M1 3H15V13H1ZM4 5L8 8L12 5M4 11L8 8L12 11", "#333"],
  ["Визуальный стиль", "M2 6L6 2H14V10L10 14H2ZM2 6H10V14M10 6L14 2", "#555"],
  ["Выкл. траектория солнца", "M3 7A4 4 0 1 1 9 10M6 0V2M0 2L2 4M0 10L2 8M11 4L13 2", "#d99a20"],
  ["Выкл. тени", "M3 8A4 4 0 1 1 9 9M1 12H8", "#3c78b4"],
  ["Выкл. подрезка", "M1 5H12V12M4 2V14H8M1 9H6", "#3c78b4"],
  ["Область подрезки", "M1 5H12V12M4 2V12H14M8 2V8", "#3c78b4"],
  ["Разблокированный вид", "M1 5L4 9Q6 13 8 9Q10 4 12 9L15 4M8 9L14 12", "#444"],
  ["Временное скрытие", "M8 9Q4 7 6 3Q9 1 11 4Q11 7 8 9V13", "#3c78b4"],
  ["Показать скрытые", "M2 2H14M2 14H14M2 2V14M5 6H8V10H5ZM11 5V12", "#999"],
  ["Зависимости", "M1 3H15M3 1V14M13 1V8M6 8H12V13H6Z", "#444"],
];

/* ---------- status bar and taskbar ---------- */

const statusIcons: [string, string, string][] = [
  ["Выбор связей", "M2 3H14V7L11 9H5L2 7ZM8 8V14", "#c09a30"],
  ["Выбор подложки", "M1 11L6 3H14M4 8H12M1 11H8M10 6V14", "#2f76b8"],
  ["Выбор закрепленных", "M5 2H12V7H5ZM3 7H13M8 7V13", "#c8552c"],
  ["Выбор по грани", "M3 4L9 2V12L3 14Z", "#2f76b8"],
  ["Перетаскивание", "M6 1V10M2 5H11M4 3L6 1L8 3", "#222"],
];

function StatusBar() {
  return (
    <footer className="flex h-[17px] shrink-0 items-center border-t border-[#9a9a9a] bg-linear-to-b from-[#dedede] to-[#bcbcbc] text-[8px] text-[#333]">
      <span className="w-[526px] shrink-0">Переместите в новую позицию</span>
      <Icon className="mr-[4px] ml-px size-[14px]" color="#888"><path d="M3 7H7V15H3ZM7 5H11V15M5 3H13V6M12 9V14" /></Icon>
      <div className="relative h-[12px] w-[138px] bg-white">
        <select aria-label="Рабочий набор" className="block h-full w-full appearance-none"><option></option></select>
        <Icon className="pointer-events-none absolute top-[3px] right-px size-[7px]" color="#aaa"><path d="M2 5L8 11L14 5" strokeWidth="2" /></Icon>
      </div>
      <Icon className="ml-[4px] size-[12px]" color="#888"><path d="M5 2H14V6L10 9L5 6ZM4 9V14H8" fill="#ddd" /></Icon>
      <span className="mr-[13px] ml-[2px]">:0</span>
      <Icon className="size-[12px]"><path d="M2 2H14V14H2Z" fill="#eee" /><path d="M2 4H14M4 7H6M8 7H12M4 10H6M8 10H12" strokeWidth="1.700" /></Icon>
      <Icon className="mr-[5px] ml-[6px] size-[12px]" color="#888"><path d="M3 2H14V14H6V10H3Z" fill="#aaa" /></Icon>
      <div className="relative h-[12px] w-[137px] bg-white">
        <select aria-label="Вариант конструкции" className="block h-full w-full appearance-none px-px text-[#8a8a8a]"><option>Главная модель</option></select>
        <Icon className="pointer-events-none absolute top-[3px] right-[2px] size-[7px]" color="#aaa"><path d="M2 5L8 11L14 5" strokeWidth="2" /></Icon>
      </div>
      <div className="ml-auto flex items-center gap-[4px] pr-[42px]">
        {statusIcons.map(([l, d, c]) => (
          <button key={l} type="button" aria-label={l}>
            <Icon className="size-[13px]" color={c}><path d={d} /><path d="M9 7V14L11 12.500L12.500 15L14 14.500L12.500 12H15Z" fill="#fff" stroke="#444" strokeWidth="1" /></Icon>
          </button>
        ))}
        <Icon className="size-[12px]" color="#999"><circle cx="8" cy="8" r="5" strokeWidth="3" strokeDasharray="3 1" /></Icon>
        <span className="flex items-center"><Icon className="size-[12px]"><path d="M2 2H14L10 8V14L6 12V8Z" fill="#aaa" /></Icon>:1</span>
      </div>
    </footer>
  );
}

const apps: { label: string; art: React.ReactNode }[] = [
  { label: "Поиск", art: <><circle cx="11" cy="7" r="5" fill="none" stroke="#fff" strokeWidth="1.500" /><path d="M7.500 10.500L2 16" stroke="#fff" strokeWidth="1.500" /></> },
  { label: "Представление задач", art: <path d="M3 2V4H10V2M3 16V14H10V16M3 6.500H10V11.500H3ZM14 2V16M13 7H15" fill="none" stroke="#fff" strokeWidth="1.500" /> },
  { label: "Edge", art: <path d="M1 9Q2 1 9 1Q17 1 17 9V11H6Q7 15 11 15Q14 15 16 13.500V16.500Q13 18 10 18Q4 17 4 11Q4 8 7 6Q3 6 1 9ZM7 8H12Q12 5 9.500 5Q7 5.500 7 8Z" fill="#1583dc" /> },
  { label: "Internet Explorer", art: <><path fillRule="evenodd" d="M9 3Q15.500 3 15.500 10V11H6Q6.500 14 9.500 14Q11 14 12 12.500H15Q13 17 9 17Q3 16 3 10Q3 4 9 3ZM6 8.500H12.500Q12 5.500 9 5.500Q6.500 6 6 8.500Z" fill="#6cc5f5" /><path d="M2 17Q-2 14 7 6Q16 -1 17 3Q17 5 16 6" fill="none" stroke="#f1c232" strokeWidth="1.600" /></> },
  { label: "Outlook", art: <><path d="M1 1H17V17H1Z" fill="#f4dca5" /><path d="M0 3H11V15H0Z" fill="#dc9413" /><circle cx="5.500" cy="9" r="3" fill="none" stroke="#fff" strokeWidth="1.800" /><path d="M12 9L17 14M17 8L12 13" stroke="#c4851a" /></> },
  { label: "Проводник", art: <><path d="M0 2H6L8 4H18V16H0Z" fill="#f3c65d" /><path d="M0 6H18V16H0Z" fill="#fbdf8f" /><path d="M4 10H14V17H11V13H7V17H4Z" fill="#3f94d0" /></> },
  { label: "Яндекс Браузер", art: <><circle cx="9" cy="9" r="8.500" fill="#fff" /><path d="M4 3.500L9 10L14 3.500M9 9V16" fill="none" stroke="#df1f26" strokeWidth="2.400" /></> },
  { label: "Chrome", art: <><circle cx="9" cy="9" r="8.500" fill="#f3c42f" /><path d="M1.500 5A8.500 8.500 0 0 1 16.500 5H9L5.500 11Z" fill="#db4437" /><path d="M1.500 5A8.500 8.500 0 0 0 8.500 17.500L12 11H5.500Z" fill="#20a05a" /><circle cx="9" cy="9" r="4" fill="#4285f4" stroke="#fff" strokeWidth="1.200" /></> },
  { label: "Блокнот", art: <><path d="M7 2L17 3L13 17L1 14Z" fill="#7fb4bd" /><path d="M7 2L12 2.500L7 15.500L1 14Z" fill="#c5e3e6" /></> },
  { label: "ArchiCAD", art: <><path d="M0 0H18V18H0Z" fill="#252f4a" /><path d="M3 17Q6 3 10 2Q14 3 15 17Q12 7 9 5Q6 8 3 17Z" fill="#b6c8e6" /></> },
  { label: "Revit", art: <><path d="M1 0H17V18H1Z" fill="#e9f2fa" /><path fillRule="evenodd" d="M4 2H10Q15 3 14 7Q13.500 9 12 10L15 16H11L8.500 11H8V16H4ZM8 5V8H10Q11 6 10 5Z" fill="#2563a8" /></> },
  { label: "Excel", art: <><path d="M2 1H17V17H2Z" fill="#e5f2e4" /><path d="M0 2H11V14H0Z" fill="#2d8b45" /><path d="M3 5L8 11M8 5L3 11" stroke="#fff" strokeWidth="1.800" /><path d="M12 5H16M12 9H16M11 13H16" stroke="#5cab69" strokeWidth="1.800" /></> },
  { label: "Запись экрана", art: <><path d="M1 2H17V16H1Z" fill="#f5e6de" /><circle cx="7" cy="9" r="3" fill="#e0522d" /><path d="M11 6H13V13H11ZM14 5H16V13H14Z" fill="#d8603c" /></> },
  { label: "Acrobat", art: <><path d="M1 1H17V17H1Z" fill="#f4f1f1" /><path d="M3 14Q8 10 8 3Q9 10 15 12Q8 10 3 14Z" fill="none" stroke="#cf2a2a" strokeWidth="1.600" /></> },
];

function Taskbar() {
  return (
    <nav aria-label="Панель задач" className="flex h-[24px] shrink-0 items-stretch bg-[#060c15] text-[#eee]">
      <button type="button" aria-label="Пуск" className="flex w-[29px] items-center pl-[6px]">
        <svg viewBox="0 0 12 12" className="size-[11px]" fill="#fff" aria-hidden="true"><path d="M0 2L5 1V5.500H0ZM6 1L12 0V5.500H6ZM0 6.500H5V11L0 10ZM6 6.500H12V12L6 11Z" /></svg>
      </button>
      {apps.map((a) => (
        <button key={a.label} type="button" aria-label={a.label} className={"flex w-[33px] items-center justify-center " + (a.label === "Revit" ? "bg-[#2c343e]" : "")}>
          <svg viewBox="0 0 18 18" className={a.label === "Поиск" || a.label === "Представление задач" ? "size-[11px]" : "size-[15px]"} aria-hidden="true">{a.art}</svg>
        </button>
      ))}
      <div className="ml-auto flex items-center pr-[12px]">
        <button type="button" aria-label="Фоновое приложение" className="mr-[26px]">
          <svg viewBox="0 0 18 20" className="h-[18px] w-[17px]" aria-hidden="true"><circle cx="9" cy="10" r="8.500" fill="#30303a" /><path d="M1 4Q9 4 9 10Q9 4 17 4Q13 8 10 10V18H8V10Q4 8 1 4Z" fill="#d52b33" /></svg>
        </button>
        <div className="flex items-center gap-[5px]">
          <Icon className="size-[10px]" color="#eee"><path d="M1 11L8 4L15 11" strokeWidth="1.800" /></Icon>
          <Icon className="size-[11px]" color="#eee"><path d="M1 6H4L7 3V13L4 10H1ZM10 5Q12 8 10 11M12.500 3Q15.500 8 12.500 13" /></Icon>
          <Icon className="size-[11px]" color="#cdd"><path d="M1 4H8V10H1Z" fill="#ccd" /><circle cx="11" cy="10" r="4.500" fill="#35a653" stroke="none" /><path d="M9 10L10.500 12L13 8" stroke="#fff" /></Icon>
          <Icon className="size-[11px]" color="#fff"><path d="M3 13Q-1 10 3 7Q4 2 9 4Q13 3 13 8Q17 10 13 13Z" fill="#fff" /><path d="M8 12V7M6 9L8 7L10 9" stroke="#123" /></Icon>
          <span className="text-[8px]">РУС</span>
        </div>
        <time className="ml-[8px] text-center text-[7px] leading-[12px]">0:38<br />25.06.2018</time>
        <button type="button" aria-label="Уведомления" className="ml-[11px]"><Icon className="size-[13px]" color="#fff"><path d="M2 2H14V12H10L8 14.500L6 12H2Z" /></Icon></button>
      </div>
    </nav>
  );
}

export default function App() {
  return (
    <div className="flex h-screen flex-col overflow-hidden bg-[#f0f0f0] font-['Roboto','Open_Sans',sans-serif]">
      <Header />
      <Ribbon />
      <QuickBar />
      <div className="flex min-h-0 flex-1">
        <aside className="flex w-[272px] shrink-0 flex-col border-r border-[#ccc]">
          <Properties />
          <Browser />
        </aside>
        <div className="w-[4px] shrink-0 bg-[#f0f0f0]" />
        <ViewArea />
      </div>
      <StatusBar />
      <Taskbar />
    </div>
  );
}
